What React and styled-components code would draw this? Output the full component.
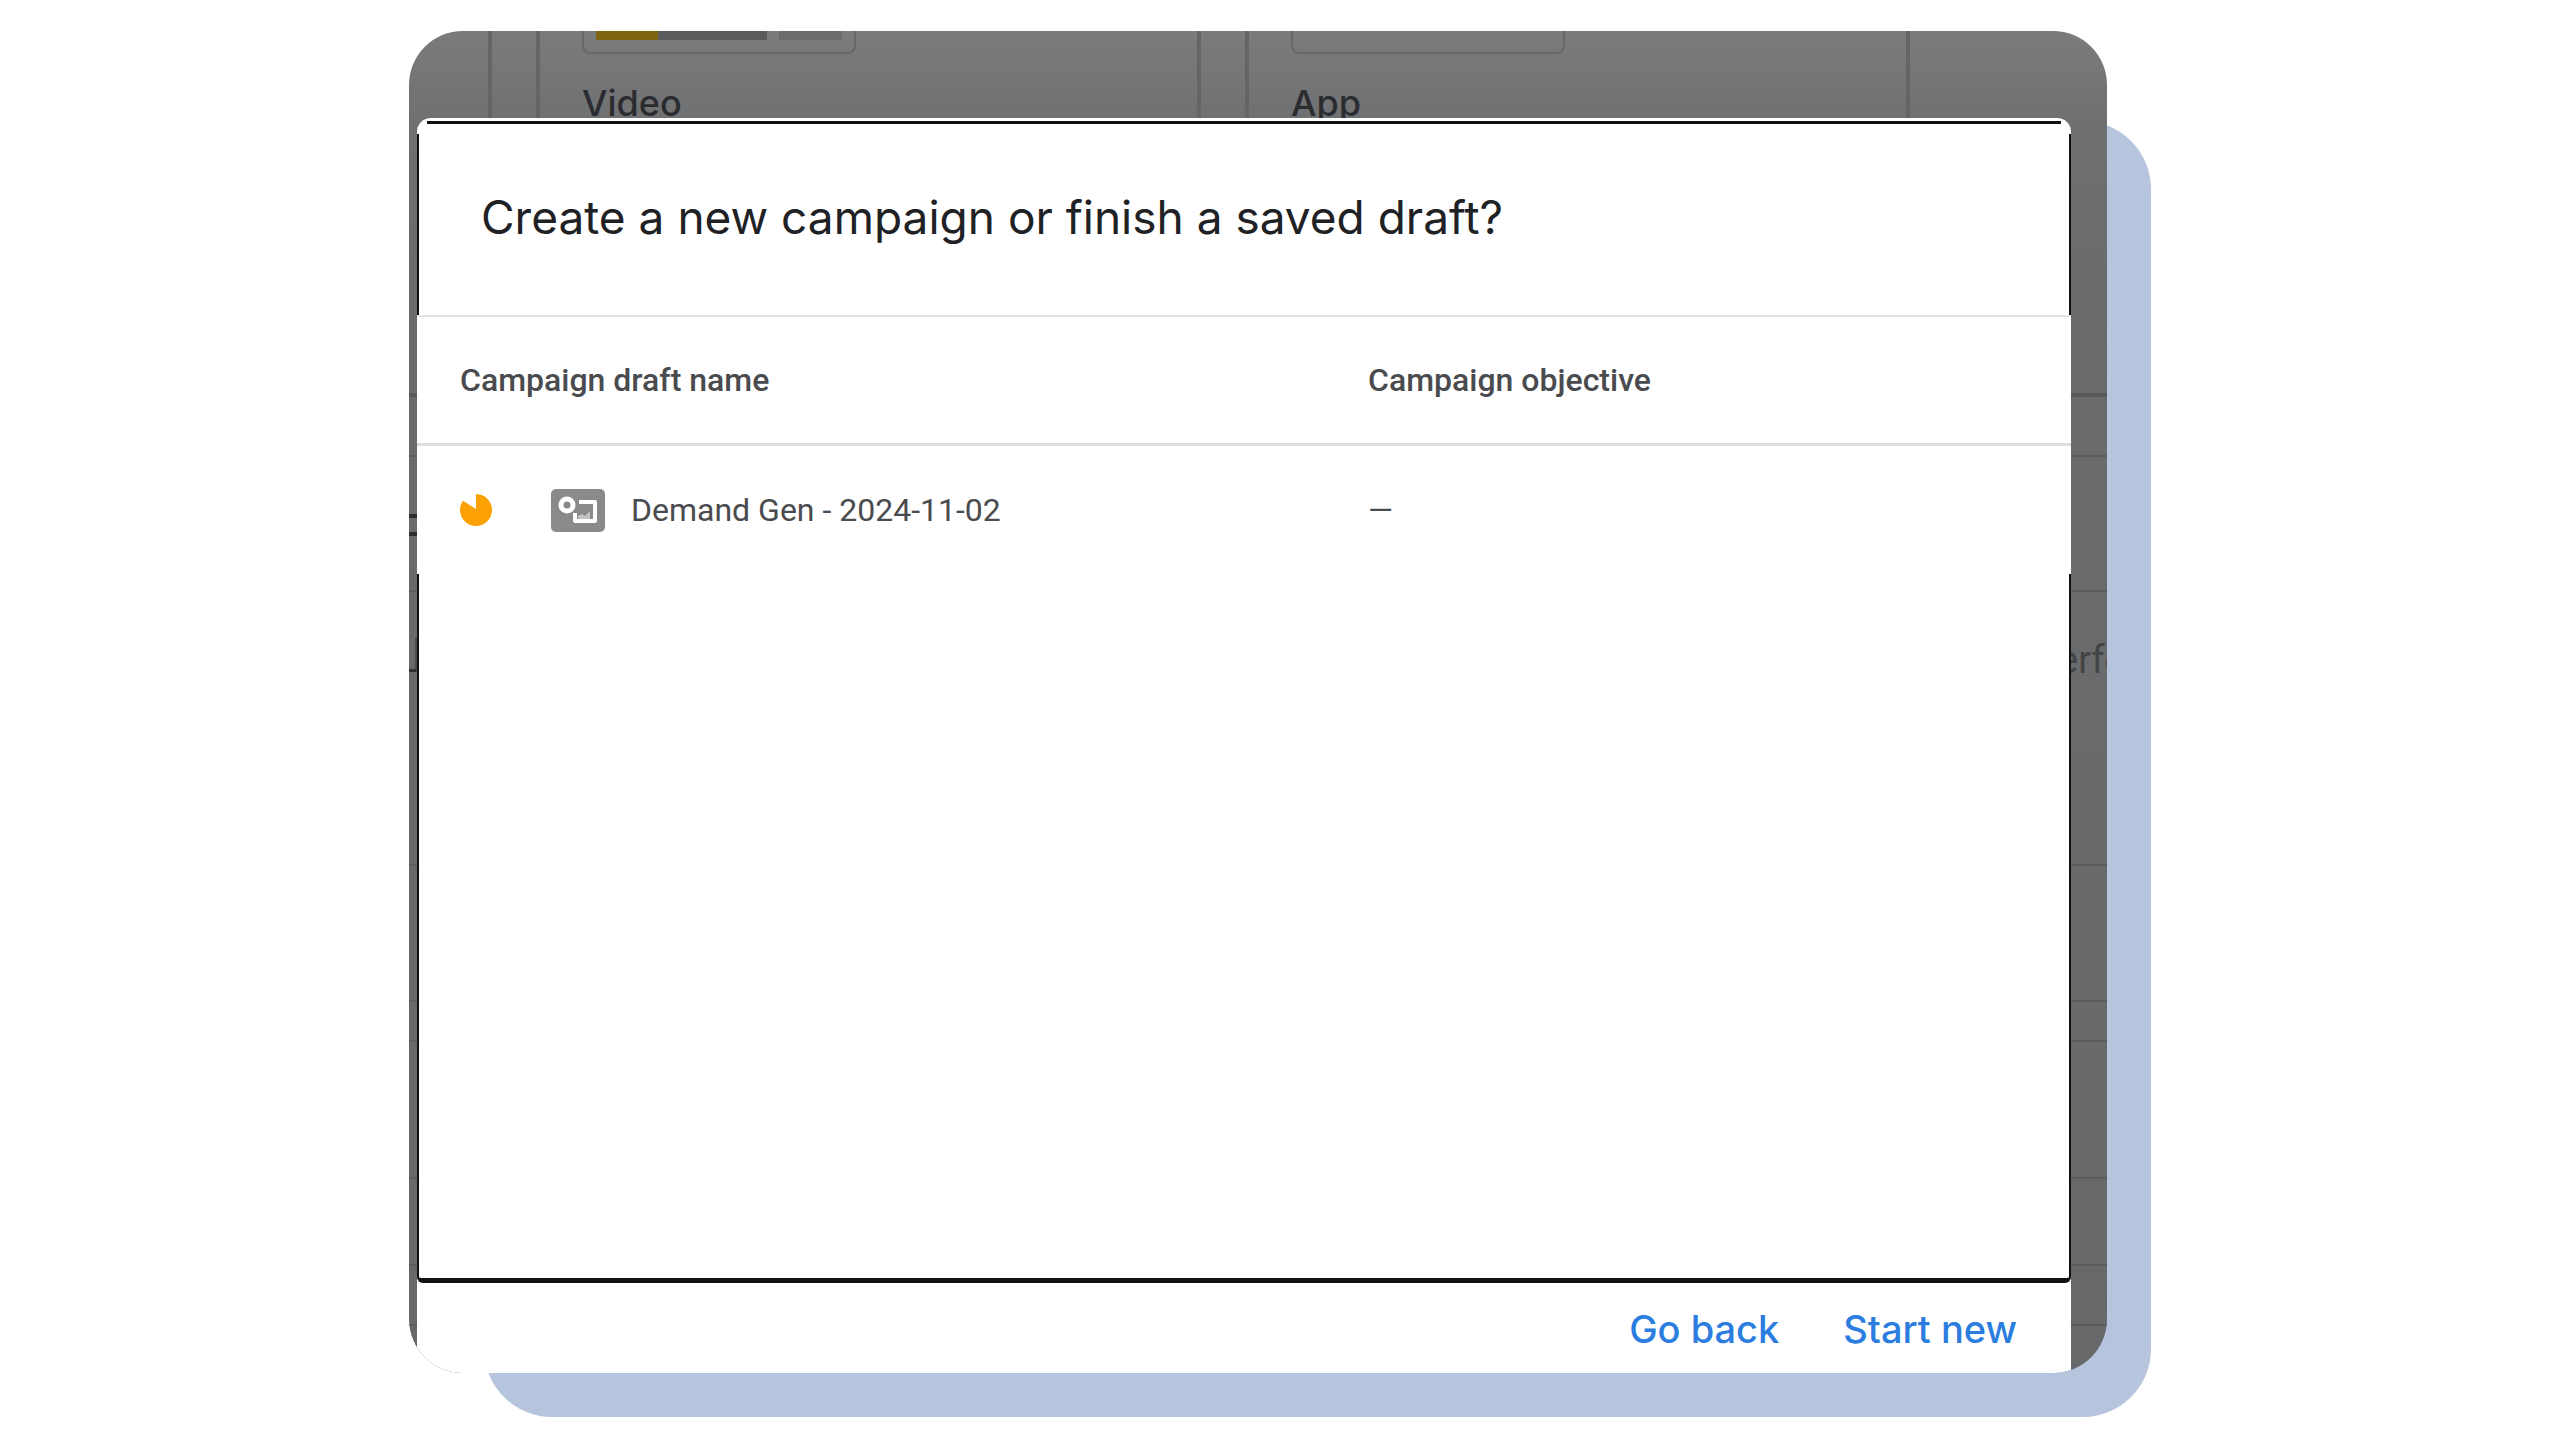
import React from "react";
import styled, { createGlobalStyle } from "styled-components";

const INK = "#101113";
const DISPLAY = 'Inter, Roboto, "Liberation Sans", sans-serif';

const GlobalStyle = createGlobalStyle`
  *, *::before, *::after { box-sizing: border-box; }
  body { margin: 0; background: #fff; font-family: Roboto, "Liberation Sans", sans-serif; }
`;

const Stage = styled.main`
  position: relative;
  max-width: 1742px;
  margin: 31px auto;
  padding: 0 44px 44px 0;
`;

const Shadow = styled.div`
  position: absolute;
  inset: 90px 0 0 75px;
  border-radius: 68px;
  background: #b6c4dd;
`;

const Frame = styled.div`
  position: relative;
  overflow: hidden;
  border-radius: 54px;
  padding: 87px 36px 0 8px;
`;

const Backdrop = styled.div`
  position: absolute;
  inset: 0;
  background: linear-gradient(#7a7b7d 0, #6f7072 90px, #6a6b6d 240px, #67686a 100%);
`;

const TypeCards = styled.div`
  display: flex;
  gap: 44px;
  height: 366px;
  border-bottom: 4px solid #58595b;
`;

const TypeCard = styled.section`
  flex: none;
  width: ${(p) => (p.$edge ? 83 : 665)}px;
  padding: ${(p) => (p.$edge ? 0 : "0 42px")};
  border: solid #646567;
  border-width: ${(p) => (p.$edge ? "0 4px 0 0" : "0 4px")};
`;

const Preview = styled.div`
  display: flex;
  gap: 12px;
  width: 274px;
  height: 23px;
  padding: 0 12px;
  border: 2px solid #666769;
  border-top: 0;
  border-radius: 0 0 8px 8px;
`;

const Bar = styled.div`
  width: ${(p) => p.$width}px;
  height: 9px;
  background: ${(p) => p.$fill};
`;

const TypeName = styled.div`
  margin-top: 27px;
  font: 500 36px/44px ${DISPLAY};
  color: #2b2c2f;
`;

const BackRow = styled.div`
  display: flex;
  justify-content: space-between;
  height: ${(p) => p.$height}px;
  padding-top: ${(p) => p.$top || 0}px;
  border-bottom: 2px solid #5b5c5e;
`;

const Glyph = styled.div`
  width: 8px;
  height: ${(p) => p.$height}px;
  border: solid #2d2e30;
  border-width: ${(p) => p.$edges};
  border-right-color: #4a4b4d;
`;

const Clipped = styled.div`
  width: 49px;
  white-space: nowrap;
  font-size: 38px;
  line-height: 44px;
  color: #434446;
`;

const Dialog = styled.div`
  position: relative;
  overflow: hidden;
  border-radius: 14px 14px 0 0;
  background: #fff;
`;

const Header = styled.header`
  padding: 69px 64px 68px;
  background:
    linear-gradient(${INK}, ${INK}) 50% 3px / calc(100% - 20px) 3px no-repeat,
    linear-gradient(${INK}, ${INK}) 0 16px / 2px 100% no-repeat,
    linear-gradient(${INK}, ${INK}) 100% 16px / 2px 100% no-repeat;
`;

const Title = styled.h1`
  margin: 0;
  font: 400 46px/60px ${DISPLAY};
  color: #202124;
`;

const DraftTable = styled.table`
  width: 100%;
  border-collapse: separate;
  border-spacing: 0;
  table-layout: fixed;
  text-align: left;
  font-size: 32px;
  line-height: 40px;
  color: #4a4b4e;
`;

const Th = styled.th`
  width: ${(p) => p.$width || "auto"};
  height: 131px;
  padding: 0 0 0 43px;
  border-top: 2px solid #e2e3e4;
  border-bottom: 3px solid #dcdddf;
  font-weight: 500;
`;

const Td = styled.td`
  height: 128px;
  padding: 0 0 0 43px;
`;

const Draft = styled.div`
  display: flex;
  align-items: center;
`;

const StatusIcon = styled.svg`
  width: 32px;
  height: 32px;
  margin-right: 59px;
`;

const TypeIcon = styled.svg`
  width: 54px;
  height: 43px;
  margin-right: 26px;
`;

const EmptyArea = styled.div`
  height: 709px;
  border: solid ${INK};
  border-width: 0 2px 5px;
  border-radius: 0 0 6px 6px;
`;

const Footer = styled.footer`
  display: flex;
  justify-content: flex-end;
  gap: 64px;
  height: 90px;
  padding: 24px 54px 22px;
`;

const Action = styled.button`
  padding: 0;
  border: 0;
  background: none;
  font: 500 38px/44px ${DISPLAY};
  color: #2b7de0;
  cursor: pointer;
`;

export default function App() {
  return (
    <>
      <GlobalStyle />
      <Stage>
        <Shadow />
        <Frame>
          <Backdrop>
            <TypeCards>
              <TypeCard $edge />
              <TypeCard>
                <Preview>
                  <Bar $width={172} $fill="linear-gradient(90deg, #80650f 62px, #5a5b5d 62px)" />
                  <Bar $width={64} $fill="#6b6c6e" />
                </Preview>
                <TypeName>Video</TypeName>
              </TypeCard>
              <TypeCard>
                <Preview />
                <TypeName>App</TypeName>
              </TypeCard>
            </TypeCards>
            <BackRow $height={60} />
            <BackRow $height={135} $top={57}>
              <Glyph $height={22} $edges="4px 0" />
            </BackRow>
            <BackRow $height={274} $top={46}>
              <Glyph $height={34} $edges="0 2px 3px 0" />
              <Clipped>erfo</Clipped>
            </BackRow>
            <BackRow $height={136} />
            <BackRow $height={40} />
            <BackRow $height={137} />
            <BackRow $height={87} />
            <BackRow $height={60} />
          </Backdrop>
          <Dialog role="dialog" aria-labelledby="dialog-title">
            <Header>
              <Title id="dialog-title">Create a new campaign or finish a saved draft?</Title>
            </Header>
            <DraftTable>
              <thead>
                <tr>
                  <Th $width="908px">Campaign draft name</Th>
                  <Th>Campaign objective</Th>
                </tr>
              </thead>
              <tbody>
                <tr>
                  <Td>
                    <Draft>
                      <StatusIcon viewBox="0 0 32 32" aria-hidden="true">
                        <path d="M16 0A16 16 0 1 1 3 6.700L16 15Z" fill="#fca103" />
                      </StatusIcon>
                      <TypeIcon viewBox="0 0 54 43" aria-hidden="true">
                        <rect width="54" height="43" rx="5" fill="#8a8a8a" />
                        <circle cx="16" cy="16" r="6" fill="none" stroke="#fff" strokeWidth="5" />
                        <path d="M28 13H44V32H24V24" fill="none" stroke="#fff" strokeWidth="4" strokeLinejoin="round" />
                        <path d="M27 30V27L31 25L34 27L39 22V30Z" fill="#c4c4c4" />
                      </TypeIcon>
                      Demand Gen - 2024-11-02
                    </Draft>
                  </Td>
                  <Td>—</Td>
                </tr>
              </tbody>
            </DraftTable>
            <EmptyArea />
            <Footer>
              <Action type="button">Go back</Action>
              <Action type="button">Start new</Action>
            </Footer>
          </Dialog>
        </Frame>
      </Stage>
    </>
  );
}
